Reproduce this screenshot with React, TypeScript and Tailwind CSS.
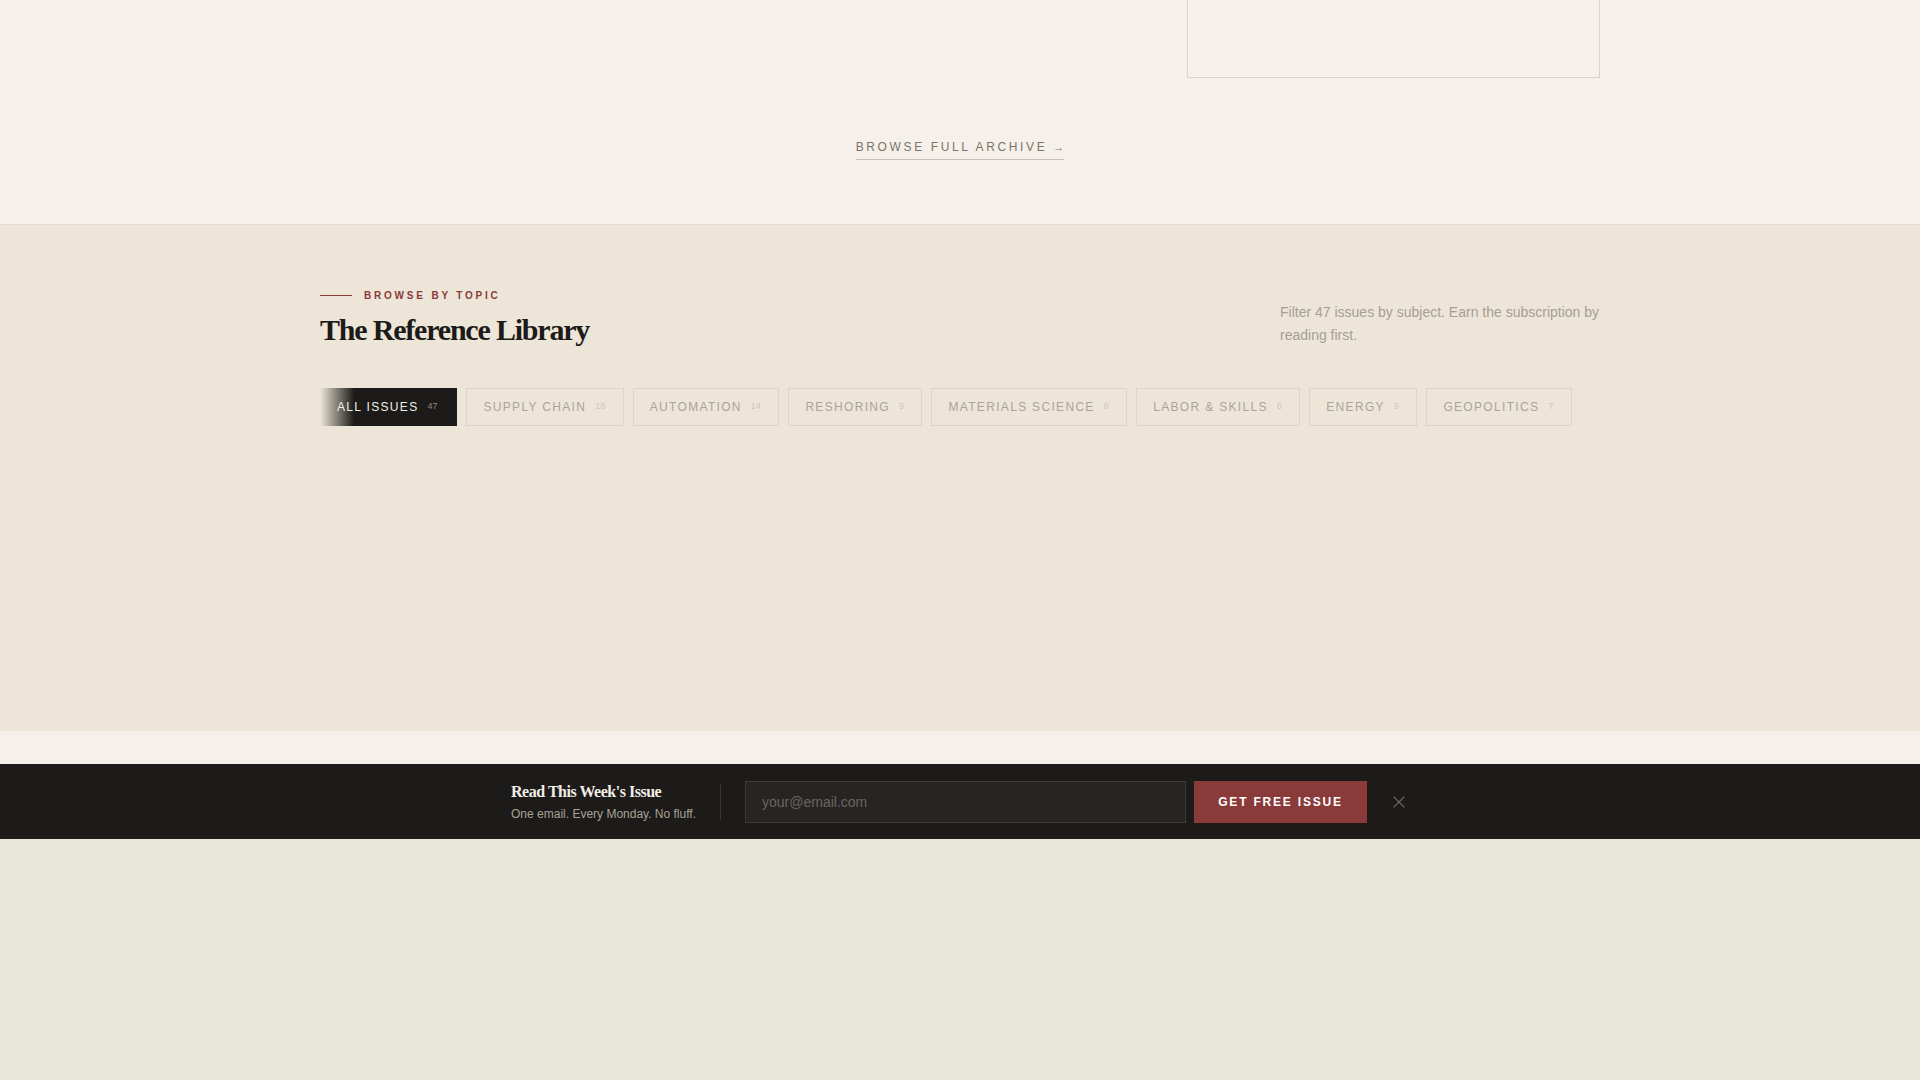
import { X } from 'lucide-react'

const topics = [
  { label: 'All Issues', count: 47, active: true },
  { label: 'Supply Chain', count: 18 },
  { label: 'Automation', count: 14 },
  { label: 'Reshoring', count: 9 },
  { label: 'Materials Science', count: 8 },
  { label: 'Labor & Skills', count: 6 },
  { label: 'Energy', count: 5 },
  { label: 'Geopolitics', count: 7 },
]

const sans = "font-['Liberation_Sans',Arial,sans-serif]"
const serif = "font-['Liberation_Serif','Times_New_Roman',serif]"

function TopicChip({ label, count, active }: { label: string; count: number; active?: boolean }) {
  return (
    <button
      className={`h-[38px] flex items-center gap-[9px] pl-[16px] pr-[17.5px] text-[12px] uppercase tracking-[0.11em] border bg-origin-border bg-no-repeat ${
        active
          ? 'pr-[19px] bg-[linear-gradient(to_right,rgba(28,27,25,0)_0px,#1c1b19_34px)] border-transparent text-[#f2eee6]'
          : 'bg-[#ede6d8] border-[#dcd4c5] text-[#aaa398]'
      }`}
    >
      <span>{label}</span>
      <span className={`text-[9px] tracking-normal ${active ? 'text-[#8c877e]' : 'text-[#cfc7b8]'}`}>{count}</span>
    </button>
  )
}

export default function App() {
  return (
    <div className={`min-h-screen bg-[#e8e7d9] ${sans}`}>
      {/* Archive tail */}
      <section className="bg-[#f5f1ea]">
        <div className="max-w-[1280px] mx-auto">
          <div className="grid grid-cols-3 gap-[21px]">
            <div />
            <div />
            <div className="h-[78px] border-x border-b border-[#d9d3c9]" />
          </div>
          <div className="flex justify-center mt-[61px] pb-[64px]">
            <a className="text-[12px] leading-[16px] uppercase tracking-[0.22em] text-[#7a7368] pb-[4px] border-b border-[#c9c2b6]">
              Browse Full Archive <span className="text-[11px] tracking-normal">→</span>
            </a>
          </div>
        </div>
      </section>

      {/* Topic library */}
      <section className="bg-[#ede6d8] border-t border-[#e2dacb] pt-[63px] pb-[305px]">
        <div className="max-w-[1280px] mx-auto">
          <div className="flex items-end justify-between">
            <div>
              <div className="flex items-center gap-3 h-[14px]">
                <span className="w-[32px] h-px bg-[#8b3a3a]" />
                <span className="text-[10px] font-bold uppercase tracking-[0.28em] text-[#8b3a3a]">Browse by Topic</span>
              </div>
              <h2 className={`${serif} mt-[10px] text-[30px] leading-[36px] font-bold tracking-[-0.04em] text-[#1c1b19]`}>
                The Reference Library
              </h2>
            </div>
            <p className="w-[320px] mb-[1px] text-[14px] leading-[23px] text-[#a59e92]">
              Filter 47 issues by subject. Earn the subscription by reading first.
            </p>
          </div>
          <div className="mt-10 flex flex-wrap gap-[9px]">
            {topics.map((t) => (
              <TopicChip key={t.label} {...t} />
            ))}
          </div>
        </div>
      </section>

      <div className="h-[33px] bg-[#f5f1ea]" />

      {/* Subscribe bar */}
      <div className="h-[75px] bg-[#1c1b1a] flex items-center justify-center">
        <div className="flex items-center">
          <div>
            <div className={`${serif} text-[16px] leading-[20px] font-bold tracking-[-0.03em] text-[#f2eee6]`}>
              Read This Week's Issue
            </div>
            <div className="mt-1 text-[12px] leading-[16px] text-[#a8a196]">One email. Every Monday. No fluff.</div>
          </div>
          <div className="mx-6 w-px h-[36px] bg-[#3a3835]" />
          <input
            placeholder="your@email.com"
            className="w-[441px] h-[42px] px-4 bg-[#262523] border border-[#3d3b38] text-[14px] text-[#f2eee6] placeholder:text-[#6b665e] outline-none"
          />
          <button className="ml-2 w-[173px] h-[42px] bg-[#8b3a3a] text-white text-[12px] font-bold uppercase tracking-[0.15em]">
            Get Free Issue
          </button>
          <button className="ml-[22px] text-[#6b665e]">
            <X size={20} strokeWidth={1.4} />
          </button>
        </div>
      </div>
    </div>
  )
}
